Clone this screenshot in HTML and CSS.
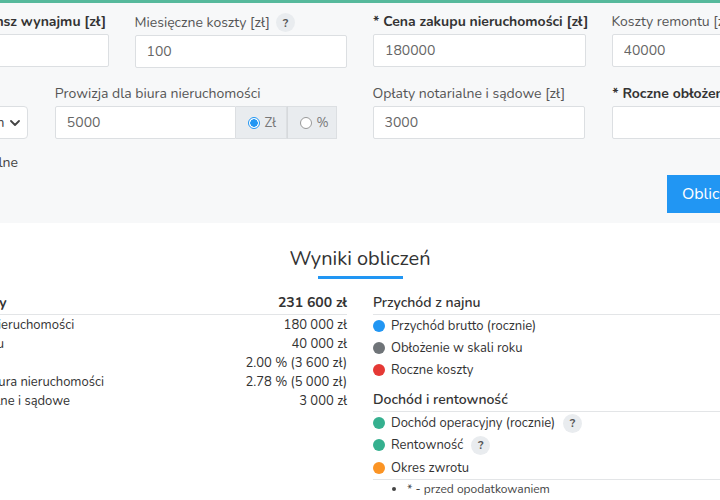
FILE: index.html
```html
<!DOCTYPE html>
<html lang="pl">
<head>
<meta charset="utf-8">
<title>Kalkulator rentowności najmu</title>
<link rel="stylesheet" href="styles.css">
</head>
<body>
<div class="page">
  <section class="form-panel">
    <div class="wrap">
      <div class="row row-main">
        <div class="field">
          <label class="lbl req">* Docelowy czynsz wynajmu [zł]</label>
          <input class="inp" type="text" value="">
        </div>
        <div class="field">
          <label class="lbl">Miesięczne koszty [zł] <span class="help">?</span></label>
          <input class="inp" type="text" value="100">
        </div>
        <div class="field">
          <label class="lbl req">* Cena zakupu nieruchomości [zł]</label>
          <input class="inp" type="text" value="180000">
        </div>
        <div class="field">
          <label class="lbl">Koszty remontu [zł]</label>
          <input class="inp" type="text" value="40000">
        </div>
      </div>
      <div class="row row-second">
        <div class="field f-select">
          <label class="lbl">Typ lokalu</label>
          <div class="select">
            <span class="select-text">Lokal mieszkan</span>
            <svg class="chev" width="10" height="6" viewBox="0 0 10 6"><path d="M1 1l4 4 4-4" fill="none" stroke="#444" stroke-width="1.8" stroke-linecap="round" stroke-linejoin="round"/></svg>
          </div>
        </div>
        <div class="field f-fee">
          <label class="lbl">Prowizja dla biura nieruchomości</label>
          <div class="group">
            <input class="inp grp-inp" type="text" value="5000">
            <span class="addon"><span class="radio on"></span>Zł</span>
            <span class="addon"><span class="radio"></span>%</span>
          </div>
        </div>
        <div class="field f-notary">
          <label class="lbl">Opłaty notarialne i sądowe [zł]</label>
          <input class="inp" type="text" value="3000">
        </div>
        <div class="field f-occ">
          <label class="lbl req">* Roczne obłożenie [%]</label>
          <input class="inp" type="text" value="">
        </div>
      </div>
      <div class="extra">
        <span class="check"></span><span>Pola opcjonalne</span>
      </div>
      <div class="actions">
        <button class="btn" type="button">Oblicz rentowność</button>
      </div>
    </div>
  </section>

  <section class="results">
    <div class="wrap">
      <h2 class="title">Wyniki obliczeń</h2>
      <div class="res-grid">
        <div class="costs">
          <div class="c-row c-head"><span>Całkowite koszty</span><span>231 600 zł</span></div>
          <div class="c-row sub"><span>Cena zakupu nieruchomości</span><span>180 000 zł</span></div>
          <div class="c-row sub"><span>Koszty remontu</span><span>40 000 zł</span></div>
          <div class="c-row sub"><span>Podatek PCC</span><span>2.00 % (3 600 zł)</span></div>
          <div class="c-row sub"><span>Prowizja dla biura nieruchomości</span><span>2.78 % (5 000 zł)</span></div>
          <div class="c-row sub"><span>Opłaty notarialne i sądowe</span><span>3 000 zł</span></div>
        </div>
        <div class="income">
          <div class="i-head">Przychód z najnu</div>
          <div class="i-row"><span class="dot blue"></span>Przychód brutto (rocznie)</div>
          <div class="i-row"><span class="dot gray"></span>Obłożenie w skali roku</div>
          <div class="i-row"><span class="dot red"></span>Roczne koszty</div>
          <div class="i-head second">Dochód i rentowność</div>
          <div class="i-row"><span class="dot teal"></span>Dochód operacyjny (rocznie) <span class="help">?</span></div>
          <div class="i-row"><span class="dot teal"></span>Rentowność <span class="help">?</span></div>
          <div class="i-row last"><span class="dot orange"></span>Okres zwrotu</div>
          <ul class="notes"><li>* - przed opodatkowaniem</li></ul>
        </div>
      </div>
    </div>
  </section>
</div>
</body>
</html>
```

FILE: styles.css
```css
* { box-sizing: border-box; }
html, body { margin: 0; padding: 0; }
body {
  background: #fff;
  font-family: "Nunito", "Lato", "Open Sans", sans-serif;
  color: #333;
  overflow: hidden;
  width: 720px;
}
.page { width: 720px; overflow: hidden; }
.wrap { width: 928px; margin-left: -104px; }

.form-panel {
  background: #f7f8f9;
  border-top: 3px solid #56b99c;
  padding: 10px 0 10px;
}
.row { display: flex; }
.row-main { display: grid; grid-template-columns: repeat(4, 212.5px); column-gap: 26px; }
.row-second { margin-top: 17px; }
.field { display: flex; flex-direction: column; }
.lbl {
  font-size: 14px;
  line-height: 18px;
  color: #555;
  white-space: nowrap;
  display: flex;
  align-items: center;
  gap: 6px;
}
.lbl.req { color: #333; font-weight: 700; }
.inp {
  margin-top: 3px;
  height: 33px;
  border: 1px solid #dcdfe2;
  border-radius: 2px;
  background: #fff;
  padding: 0 11px;
  font: inherit;
  font-size: 14px;
  color: #666;
  width: 100%;
}
.help {
  display: inline-flex;
  align-items: center;
  justify-content: center;
  width: 19px;
  height: 19px;
  border-radius: 50%;
  background: #e9ecef;
  color: #555;
  font-size: 12px;
  font-weight: 700;
}

.f-select { width: 132px; margin-right: 27px; }
.select {
  margin-top: 3px;
  height: 33px;
  background: #fff;
  border: 1px solid #dcdfe2;
  border-radius: 4px;
  display: flex;
  align-items: center;
  justify-content: space-between;
  padding: 0 7px 0 12px;
  font-size: 14px;
  color: #444;
  white-space: nowrap;
  overflow: hidden;
}
.select-text { overflow: hidden; }
.chev { flex: none; margin-left: 4px; }
.f-fee { width: 282px; margin-right: 36px; }
.group { display: flex; margin-top: 3px; height: 33px; }
.grp-inp { margin-top: 0; flex: 1; border-radius: 2px 0 0 2px; }
.addon {
  display: flex;
  align-items: center;
  gap: 5px;
  background: #e9ecef;
  border: 1px solid #dcdfe2;
  border-left: none;
  padding: 0 10px 0 12px;
  font-size: 13px;
  color: #777;
  width: 51px;
}
.addon + .addon { width: 50px; border-left: 1px solid #d6d9dc; }
.radio {
  width: 12px;
  height: 12px;
  border-radius: 50%;
  border: 1px solid #999;
  background: #fff;
  flex: none;
}
.radio.on { border: 1px solid #2196f3; background: radial-gradient(circle, #2196f3 0 3.5px, #fff 4px); }
.f-notary { width: 213px; margin-right: 27px; }
.f-occ { width: 212px; }

.extra {
  margin-top: 14px;
  display: flex;
  align-items: center;
  gap: 8px;
  font-size: 14px;
  line-height: 20px;
  color: #444;
}
.check { width: 14px; height: 14px; border: 1px solid #aaa; border-radius: 2px; background: #fff; }
.actions { display: flex; justify-content: flex-end; margin-top: 2px; }
.btn {
  width: 157px;
  height: 38px;
  background: #2196f3;
  color: #fff;
  border: none;
  border-radius: 0;
  font: inherit;
  font-size: 16px;
  text-align: left;
  padding: 0 15px;
  white-space: nowrap;
  overflow: hidden;
}

.results { background: #fff; padding-top: 23px; }
.title {
  margin: 0;
  text-align: center;
  font-size: 20px;
  line-height: 26px;
  font-weight: 400;
  color: #333;
}
.title::after {
  content: "";
  display: block;
  width: 85px;
  height: 3px;
  margin: 4px auto 0;
  background: #2196f3;
}
.res-grid {
  display: grid;
  grid-template-columns: 451px 451px;
  column-gap: 26px;
  margin-top: 14px;
}
.c-row {
  display: flex;
  justify-content: space-between;
  font-size: 13px;
  line-height: 19px;
  color: #333;
}
.c-row.sub { padding-left: 17px; }
.c-head {
  font-size: 14px;
  font-weight: 700;
  line-height: 20px;
  padding-bottom: 1px;
  border-bottom: 1px solid #e3e5e7;
  margin-bottom: 1px;
}
.i-head {
  font-size: 14px;
  font-weight: 600;
  line-height: 20px;
  color: #333;
  padding-bottom: 1px;
  border-bottom: 1px solid #e3e5e7;
}
.i-head.second { margin-top: 9px; }
.i-row {
  display: flex;
  align-items: center;
  gap: 6px;
  height: 22px;
  font-size: 13px;
  color: #333;
}
.i-row .help { margin-left: 2px; }
.i-row.last { border-bottom: 1px solid #e3e5e7; height: 24px; }
.dot { width: 12px; height: 12px; border-radius: 50%; flex: none; }
.dot.blue { background: #2196f3; }
.dot.gray { background: #6f7478; }
.dot.red { background: #e53935; }
.dot.teal { background: #35b08f; }
.dot.orange { background: #fb9424; }
.notes {
  margin: 1px 0 0;
  padding-left: 34px;
  font-size: 12px;
  line-height: 16px;
  color: #444;
}
```
